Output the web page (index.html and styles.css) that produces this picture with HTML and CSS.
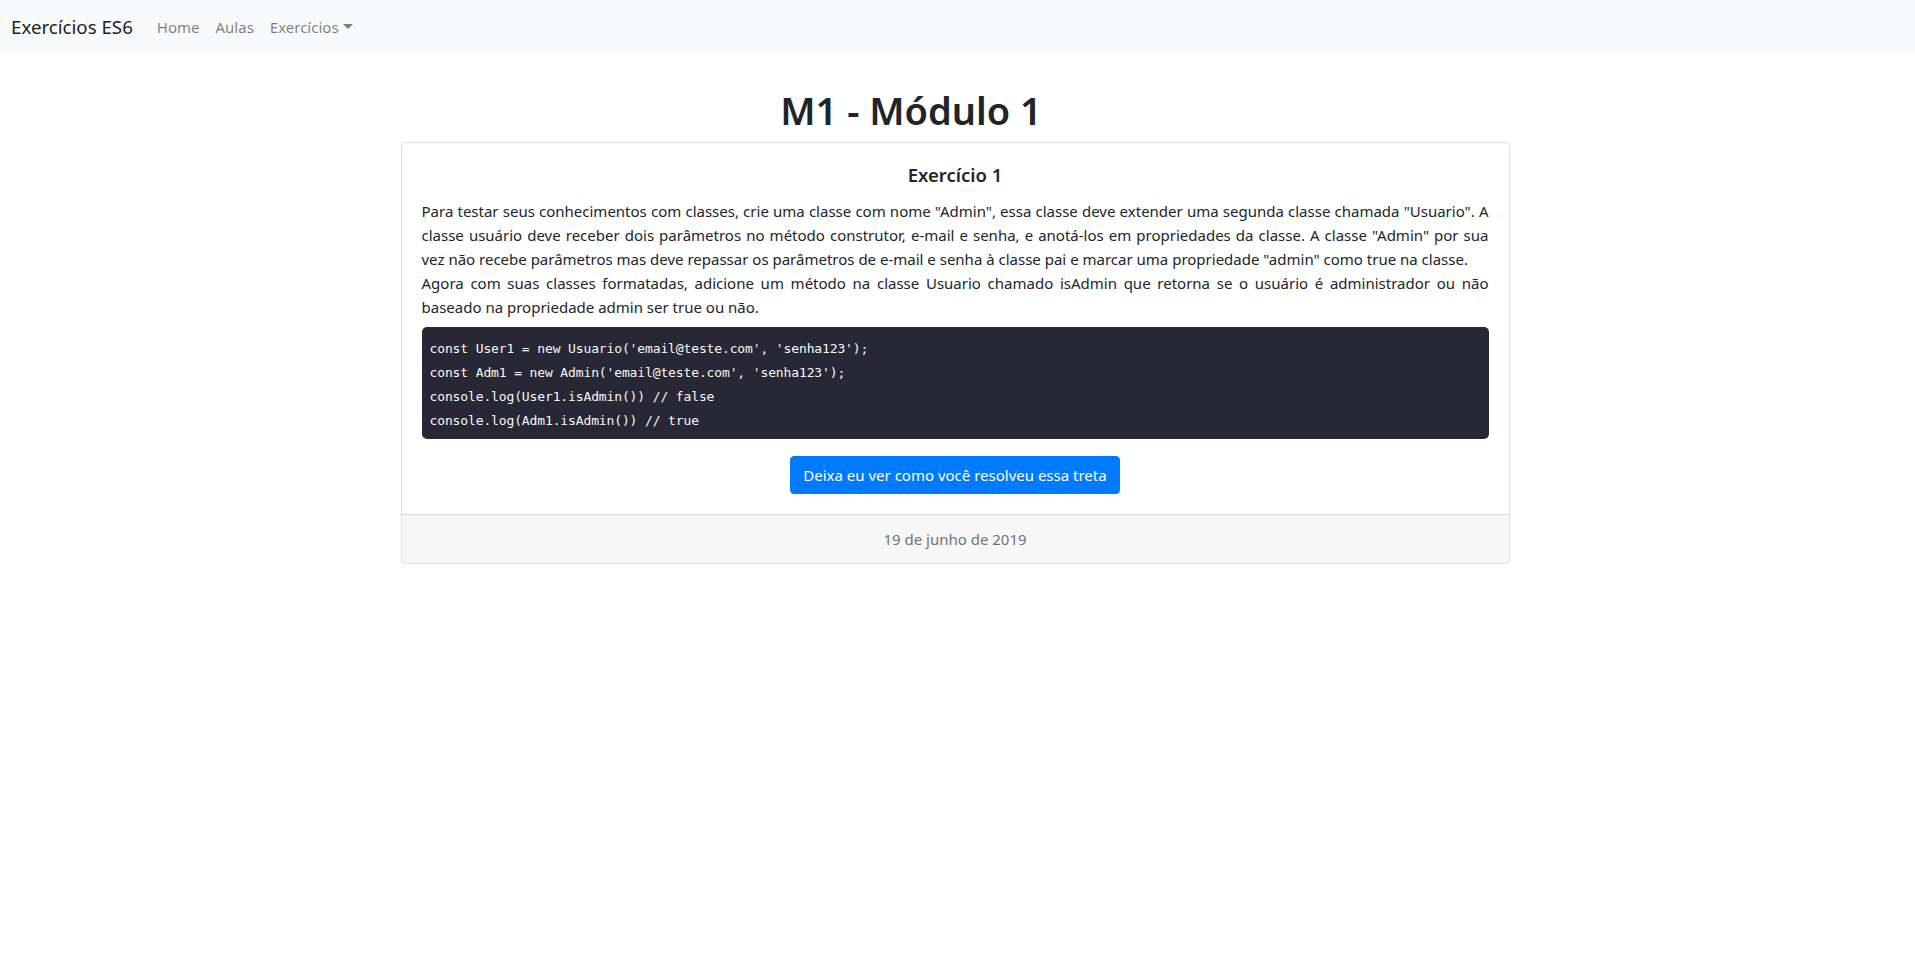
FILE: index.html
```html
<!DOCTYPE html>
<html lang="pt-br">
<head>
<meta charset="utf-8">
<title>Exercícios ES6</title>
<link rel="stylesheet" href="styles.css">
</head>
<body>
<nav class="navbar">
  <a class="brand" href="#">Exercícios ES6</a>
  <ul class="nav">
    <li><a class="nav-link" href="#">Home</a></li>
    <li><a class="nav-link" href="#">Aulas</a></li>
    <li><a class="nav-link dropdown" href="#">Exercícios</a></li>
  </ul>
</nav>
<main class="container">
  <h1 class="title">M1 - Módulo 1</h1>
  <section class="card">
    <div class="card-body">
      <h5 class="card-title">Exercício 1</h5>
      <p class="card-text"><span class="ln">Para testar seus conhecimentos com classes, crie uma classe com nome "Admin", essa classe deve extender uma segunda classe chamada "Usuario". A</span><span class="ln">classe usuário deve receber dois parâmetros no método construtor, e-mail e senha, e anotá-los em propriedades da classe. A classe "Admin" por sua</span><span class="ln last">vez não recebe parâmetros mas deve repassar os parâmetros de e-mail e senha à classe pai e marcar uma propriedade "admin" como true na classe.</span><span class="ln">Agora com suas classes formatadas, adicione um método na classe Usuario chamado isAdmin que retorna se o usuário é administrador ou não</span><span class="ln last">baseado na propriedade admin ser true ou não.</span></p>
      <pre class="code"><code>const User1 = new Usuario('email@teste.com', 'senha123');
const Adm1 = new Admin('email@teste.com', 'senha123');
console.log(User1.isAdmin()) // false
console.log(Adm1.isAdmin()) // true</code></pre>
      <div class="actions"><a class="btn" href="#">Deixa eu ver como você resolveu essa treta</a></div>
    </div>
    <div class="card-footer">19 de junho de 2019</div>
  </section>
</main>
</body>
</html>
```

FILE: styles.css
```css
* { box-sizing: border-box; }
html, body { margin: 0; padding: 0; }
body {
  font-family: "Noto Sans", "Open Sans", sans-serif;
  font-size: 15px;
  line-height: 24px;
  color: #212529;
  background: #fff;
}
a { text-decoration: none; }

.navbar {
  display: flex;
  align-items: center;
  height: 54px;
  padding: 0 11px;
  background: #f8f9fa;
}
.brand {
  font-size: 18.7px;
  line-height: 30px;
  color: rgba(0,0,0,.9);
  margin-right: 16px;
}
.nav { display: flex; list-style: none; margin: 0; padding: 0; }
.nav-link {
  display: block;
  padding: 8px 8px;
  color: rgba(0,0,0,.5);
}
.dropdown::after {
  content: "";
  display: inline-block;
  margin-left: 4px;
  vertical-align: 4px;
  border-top: 5px solid;
  border-left: 5px solid transparent;
  border-right: 5px solid transparent;
}

.container {
  max-width: 1140px;
  margin: 32px auto 0;
  padding: 0 18px 0 13px;
}
.title {
  margin: 0 0 8px;
  padding-right: 88px;
  text-align: center;
  font-size: 38px;
  line-height: 48px;
  font-weight: 600;
}
.card {
  border: 1px solid rgba(0,0,0,.125);
  border-radius: 4px;
}
.card-body { padding: 20px; }
.card-title {
  margin: 0 0 12px;
  text-align: center;
  font-size: 18.5px;
  line-height: 24px;
  font-weight: 600;
}
.card-text { margin: 0 0 8px; }
.ln { display: block; text-align: justify; text-align-last: justify; }
.ln.last { text-align-last: left; }
.code {
  margin: 0 0 17px;
  padding: 10px 8px 6px;
  background: #282736;
  color: #f8f8f2;
  border-radius: 5px;
  font-family: "DejaVu Sans Mono", monospace;
  font-size: 13px;
  letter-spacing: -0.13px;
  line-height: 24px;
}
.actions { text-align: center; }
.btn {
  display: inline-block;
  padding: 6px 12px;
  border: 1px solid #007bff;
  border-radius: 4px;
  background: #007bff;
  color: #fff;
  line-height: 24px;
}
.card-footer {
  padding: 12px 20px;
  text-align: center;
  color: #6c757d;
  background: rgba(0,0,0,.03);
  border-top: 1px solid rgba(0,0,0,.125);
}
```
